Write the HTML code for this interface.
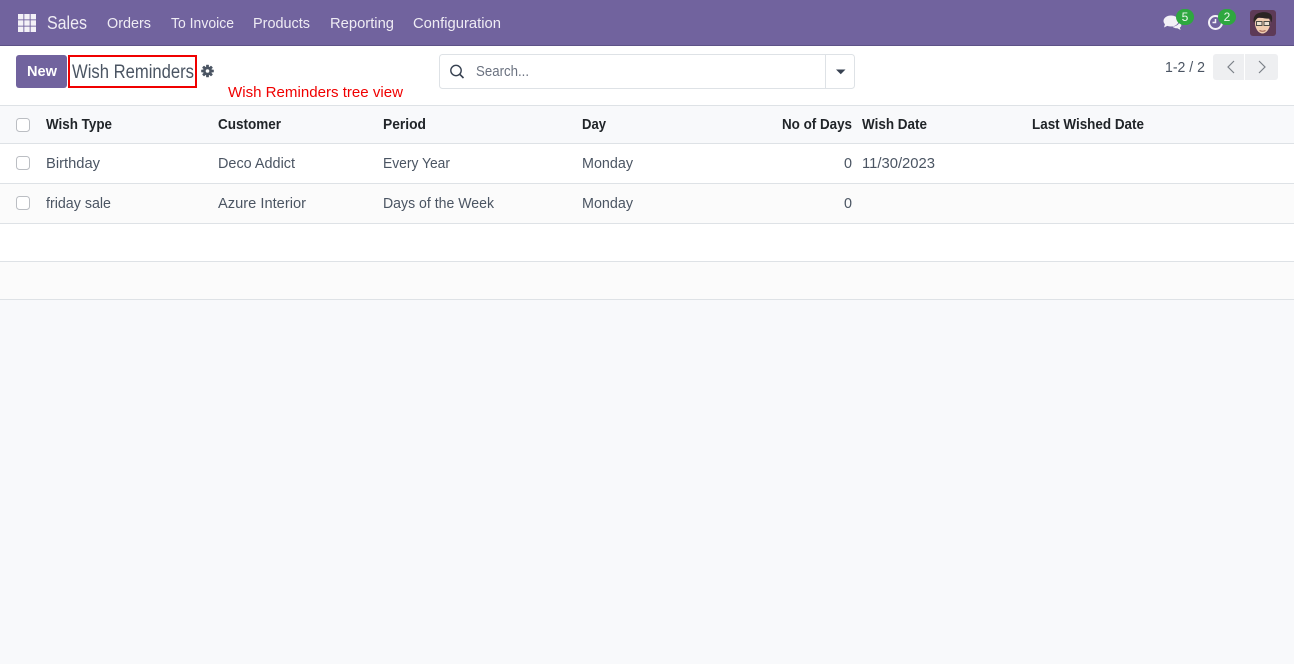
<!DOCTYPE html>
<html><head><meta charset="utf-8"><title>Wish Reminders</title>
<style>
html,body{margin:0;padding:0;width:1294px;height:664px;overflow:hidden;background:#f8f9fb;}
svg{display:block;position:absolute;left:0;top:0}
text{font-family:"Liberation Sans",sans-serif;font-size:15px;fill:#4b5563;}
.n{fill:#efecf4}
.h{font-weight:bold;fill:#212529;font-size:15px}
</style></head>
<body>
<svg width="1294" height="664" viewBox="0 0 1294 664" xmlns="http://www.w3.org/2000/svg">
<rect width="1294" height="664" fill="#f8f9fb"/>
<!-- navbar -->
<rect width="1294" height="45" fill="#71639e"/>
<rect y="45" width="1294" height="1" fill="#5d5287"/>
<g fill="#f3f1f7">
<rect x="18" y="14" width="5.400" height="5.400"/><rect x="24.300" y="14" width="5.400" height="5.400"/><rect x="30.600" y="14" width="5.400" height="5.400"/>
<rect x="18" y="20.300" width="5.400" height="5.400"/><rect x="24.300" y="20.300" width="5.400" height="5.400"/><rect x="30.600" y="20.300" width="5.400" height="5.400"/>
<rect x="18" y="26.600" width="5.400" height="5.400"/><rect x="24.300" y="26.600" width="5.400" height="5.400"/><rect x="30.600" y="26.600" width="5.400" height="5.400"/>
</g>
<text class="n" x="47" y="29" style="font-size:18px" textLength="40" lengthAdjust="spacingAndGlyphs">Sales</text>
<text class="n" x="107" y="28" textLength="44" lengthAdjust="spacingAndGlyphs">Orders</text>
<text class="n" x="171" y="28" textLength="63" lengthAdjust="spacingAndGlyphs">To Invoice</text>
<text class="n" x="253" y="28" textLength="57" lengthAdjust="spacingAndGlyphs">Products</text>
<text class="n" x="330" y="28" textLength="64" lengthAdjust="spacingAndGlyphs">Reporting</text>
<text class="n" x="413" y="28" textLength="88" lengthAdjust="spacingAndGlyphs">Configuration</text>
<!-- systray -->
<ellipse cx="1171" cy="21" rx="7.500" ry="5.500" fill="#f3f1f7"/>
<path d="M1165 24l-1 3.500 5-2.500z" fill="#f3f1f7"/>
<path d="M1179.500 22.500c1.200.7 1.800 1.700 1.800 2.700 0 1-.6 1.800-1.500 2.400l.8 2.400-3.300-1.700c-2 0-3.800-.5-4.800-1.700 3.300-.2 6.400-1.800 7-4.600z" fill="#f3f1f7"/>
<rect x="1176" y="9" width="18" height="16" rx="8" fill="#2ea83f"/>
<text x="1185" y="21" text-anchor="middle" style="font-size:12px;fill:#ebf6ec">5</text>
<circle cx="1215.500" cy="22.500" r="6.500" fill="none" stroke="#f3f1f7" stroke-width="2"/>
<path d="M1215.500 19v3.500h-3" fill="none" stroke="#f3f1f7" stroke-width="1.500"/>
<rect x="1218" y="9" width="18" height="16" rx="8" fill="#2ea83f"/>
<text x="1227" y="21" text-anchor="middle" style="font-size:12px;fill:#ebf6ec">2</text>
<!-- avatar -->
<rect x="1250" y="10" width="26" height="26" rx="3" fill="#5d3a56"/>
<path d="M1255 24c0-3 1-5 2-6h11c1.500 1 2.500 3 2 6.500-.5 5-4 9-7.500 9s-7-4-7.500-9.500z" fill="#f0cdb0"/>
<path d="M1254 23c-1.500-5 1-9 5-10 4-1.500 9-1 11.500 1 2 2 2 5 .8 8.500l-1.300-4c-3 .5-8-.5-11-1.500-2 1.500-3.500 3-5 6z" fill="#2b2523"/>
<rect x="1256.500" y="21.500" width="5.500" height="4" fill="#e8e4d8" fill-opacity=".8" stroke="#4a4a44"/>
<rect x="1264" y="21.500" width="5.500" height="4" fill="#e8e4d8" fill-opacity=".8" stroke="#4a4a44"/>
<path d="M1259.500 30.500q3 1.500 6 0" fill="none" stroke="#a06050" stroke-width="1.100"/>
<!-- control panel -->
<rect y="46" width="1294" height="59" fill="#fff"/>
<rect x="16" y="55" width="51" height="33" rx="3" fill="#71639e"/>
<text x="27" y="76" style="font-weight:bold;fill:#fff;font-size:14.500px" textLength="30" lengthAdjust="spacingAndGlyphs">New</text>
<rect x="69" y="56" width="127" height="31" fill="none" stroke="#f00000" stroke-width="2"/>
<text x="72" y="78" style="font-size:19px;fill:#4b5563" textLength="122" lengthAdjust="spacingAndGlyphs">Wish Reminders</text>
<!-- gear -->
<g fill="#4b5563" transform="translate(207.500 71)">
<circle r="4.500"/>
<rect x="-1.400" y="-6.300" width="2.800" height="12.600" rx=".6"/>
<rect x="-1.400" y="-6.300" width="2.800" height="12.600" rx=".6" transform="rotate(45)"/>
<rect x="-1.400" y="-6.300" width="2.800" height="12.600" rx=".6" transform="rotate(90)"/>
<rect x="-1.400" y="-6.300" width="2.800" height="12.600" rx=".6" transform="rotate(135)"/>
<circle r="1.800" fill="#fff"/>
</g>
<text x="228" y="97" style="font-size:15px;fill:#f00000" textLength="175" lengthAdjust="spacingAndGlyphs">Wish Reminders tree view</text>
<!-- search -->
<rect x="439.500" y="54.500" width="415" height="34" rx="3" fill="#fff" stroke="#dee2e6"/>
<line x1="825.500" y1="55" x2="825.500" y2="88" stroke="#dee2e6"/>
<circle cx="456" cy="70.500" r="5.200" fill="none" stroke="#374151" stroke-width="1.400"/>
<line x1="459.700" y1="74.200" x2="463.500" y2="78" stroke="#374151" stroke-width="1.600"/>
<text x="476" y="76" style="fill:#6b7280" textLength="53" lengthAdjust="spacingAndGlyphs">Search...</text>
<path d="M836 69.500h9.500l-4.750 4.800z" fill="#374151"/>
<!-- pager -->
<text x="1165" y="72" style="fill:#4b5563" textLength="40" lengthAdjust="spacingAndGlyphs">1-2 / 2</text>
<path d="M1216 54h28v26h-28a3 3 0 0 1-3-3v-20a3 3 0 0 1 3-3z" fill="#eeeff1"/>
<path d="M1245 54h30a3 3 0 0 1 3 3v20a3 3 0 0 1-3 3h-30z" fill="#eeeff1"/>
<path d="M1234 61l-6 6 6 6" fill="none" stroke="#7b8088" stroke-width="1.200"/>
<path d="M1259 61l6 6-6 6" fill="none" stroke="#7b8088" stroke-width="1.200"/>
<!-- table -->
<rect y="105" width="1294" height="1" fill="#dee2e6"/>
<rect y="106" width="1294" height="37" fill="#f8f9fb"/>
<rect y="143" width="1294" height="1" fill="#dee2e6"/>
<rect y="144" width="1294" height="39" fill="#fff"/>
<rect y="183" width="1294" height="1" fill="#dee2e6"/>
<rect y="184" width="1294" height="39" fill="#fbfbfb"/>
<rect y="223" width="1294" height="1" fill="#dee2e6"/>
<rect y="224" width="1294" height="37" fill="#fff"/>
<rect y="261" width="1294" height="1" fill="#dee2e6"/>
<rect y="262" width="1294" height="37" fill="#fbfbfb"/>
<rect y="299" width="1294" height="1" fill="#dee2e6"/>
<g fill="#fff" stroke="#bbbec3">
<rect x="16.500" y="118.500" width="13" height="13" rx="3"/>
<rect x="16.500" y="156.500" width="13" height="13" rx="3"/>
<rect x="16.500" y="196.500" width="13" height="13" rx="3"/>
</g>
<text class="h" x="46" y="129" textLength="66" lengthAdjust="spacingAndGlyphs">Wish Type</text>
<text class="h" x="218" y="129" textLength="63" lengthAdjust="spacingAndGlyphs">Customer</text>
<text class="h" x="383" y="129" textLength="43" lengthAdjust="spacingAndGlyphs">Period</text>
<text class="h" x="582" y="129" textLength="24" lengthAdjust="spacingAndGlyphs">Day</text>
<text class="h" x="782" y="129" textLength="70" lengthAdjust="spacingAndGlyphs">No of Days</text>
<text class="h" x="862" y="129" textLength="65" lengthAdjust="spacingAndGlyphs">Wish Date</text>
<text class="h" x="1032" y="129" textLength="112" lengthAdjust="spacingAndGlyphs">Last Wished Date</text>
<text x="46" y="168" textLength="54" lengthAdjust="spacingAndGlyphs">Birthday</text>
<text x="218" y="168" textLength="77" lengthAdjust="spacingAndGlyphs">Deco Addict</text>
<text x="383" y="168" textLength="67" lengthAdjust="spacingAndGlyphs">Every Year</text>
<text x="582" y="168" textLength="51" lengthAdjust="spacingAndGlyphs">Monday</text>
<text x="844" y="168" textLength="8" lengthAdjust="spacingAndGlyphs">0</text>
<text x="862" y="168" textLength="73" lengthAdjust="spacingAndGlyphs">11/30/2023</text>
<text x="46" y="208" textLength="65" lengthAdjust="spacingAndGlyphs">friday sale</text>
<text x="218" y="208" textLength="88" lengthAdjust="spacingAndGlyphs">Azure Interior</text>
<text x="383" y="208" textLength="111" lengthAdjust="spacingAndGlyphs">Days of the Week</text>
<text x="582" y="208" textLength="51" lengthAdjust="spacingAndGlyphs">Monday</text>
<text x="844" y="208" textLength="8" lengthAdjust="spacingAndGlyphs">0</text>
</svg>
</body></html>
